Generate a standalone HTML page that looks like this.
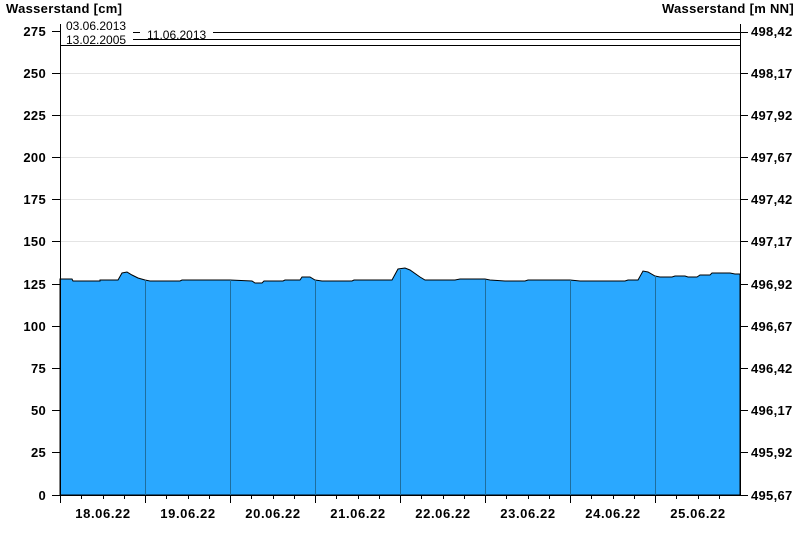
<!DOCTYPE html>
<html><head><meta charset="utf-8"><style>
body{margin:0;background:#fff;}
svg{display:block;font-family:"Liberation Sans",sans-serif;}
.b{font-weight:bold;font-size:13px;fill:#000;letter-spacing:0.3px}
.d{font-weight:bold;font-size:13px;fill:#000;letter-spacing:0.6px}
.s{font-size:12px;fill:#000}
</style></head><body>
<svg width="800" height="550" viewBox="0 0 800 550">
<rect width="800" height="550" fill="#fff"/>
<g stroke="#e4e4e4" stroke-width="1">
<line x1="60" x2="740" y1="73.5" y2="73.5"/>
<line x1="60" x2="740" y1="115.5" y2="115.5"/>
<line x1="60" x2="740" y1="157.5" y2="157.5"/>
<line x1="60" x2="740" y1="199.5" y2="199.5"/>
<line x1="60" x2="740" y1="241.5" y2="241.5"/>
</g>
<polygon fill="#2aa8ff" stroke="#000" stroke-width="1" points="60,495 60,279 72,279 73,281 100,281 100,280 118,280 122,273 127,272 132,275 138,278 145,280 150,281 180,281 182,280 230,280 252,281 255,283 262,283 264,281 283,281 285,280 300,280 302,277 310,277 315,280 322,281 352,281 354,280 392,280 398,269 405,268 410,270 420,277 425,280 455,280 460,279 485,279 490,280 505,281 525,281 528,280 570,280 580,281 625,281 628,280 638,280 643,271 648,272 655,276 660,277 672,277 675,276 685,276 688,277 697,277 700,275 710,275 712,273 730,273 735,274 740,274 740,495"/>
<g stroke="#1e6e9e" stroke-width="1">
<line x1="145.5" x2="145.5" y1="280" y2="495"/><line x1="230.5" x2="230.5" y1="280" y2="495"/>
<line x1="315.5" x2="315.5" y1="280" y2="495"/><line x1="400.5" x2="400.5" y1="270" y2="495"/>
<line x1="485.5" x2="485.5" y1="280" y2="495"/><line x1="570.5" x2="570.5" y1="280" y2="495"/>
<line x1="655.5" x2="655.5" y1="276" y2="495"/>
</g>
<g stroke="#000" stroke-width="1">
<line x1="60.5" x2="60.5" y1="24" y2="503"/>
<line x1="740.5" x2="740.5" y1="24" y2="495"/>
<line x1="52" x2="740" y1="495.5" y2="495.5"/>
<line x1="133" x2="140" y1="32.5" y2="32.5"/><line x1="213" x2="748" y1="32.5" y2="32.5"/>
<line x1="133" x2="740" y1="39.5" y2="39.5"/>
<line x1="60" x2="740" y1="45.5" y2="45.5"/>
<line x1="52" x2="60" y1="31.5" y2="31.5"/><line x1="52" x2="60" y1="73.5" y2="73.5"/><line x1="52" x2="60" y1="115.5" y2="115.5"/><line x1="52" x2="60" y1="157.5" y2="157.5"/><line x1="52" x2="60" y1="199.5" y2="199.5"/><line x1="52" x2="60" y1="241.5" y2="241.5"/><line x1="52" x2="60" y1="284.5" y2="284.5"/><line x1="52" x2="60" y1="326.5" y2="326.5"/><line x1="52" x2="60" y1="368.5" y2="368.5"/><line x1="52" x2="60" y1="410.5" y2="410.5"/><line x1="52" x2="60" y1="452.5" y2="452.5"/>
<line x1="740" x2="748" y1="73.5" y2="73.5"/><line x1="740" x2="748" y1="115.5" y2="115.5"/><line x1="740" x2="748" y1="157.5" y2="157.5"/><line x1="740" x2="748" y1="199.5" y2="199.5"/><line x1="740" x2="748" y1="241.5" y2="241.5"/><line x1="740" x2="748" y1="284.5" y2="284.5"/><line x1="740" x2="748" y1="326.5" y2="326.5"/><line x1="740" x2="748" y1="368.5" y2="368.5"/><line x1="740" x2="748" y1="410.5" y2="410.5"/><line x1="740" x2="748" y1="452.5" y2="452.5"/><line x1="740" x2="748" y1="495.5" y2="495.5"/>
<path d="M81.5 495v4M103.5 495v4M124.5 495v4M166.5 495v4M188.5 495v4M209.5 495v4M251.5 495v4M273.5 495v4M294.5 495v4M336.5 495v4M358.5 495v4M379.5 495v4M421.5 495v4M443.5 495v4M464.5 495v4M506.5 495v4M528.5 495v4M549.5 495v4M591.5 495v4M613.5 495v4M634.5 495v4M676.5 495v4M698.5 495v4M719.5 495v4"/>
<path d="M145.5 495v8M230.5 495v8M315.5 495v8M400.5 495v8M485.5 495v8M570.5 495v8M655.5 495v8"/>
</g>
<text class="b" x="6" y="13">Wasserstand [cm]</text>
<text class="b" x="794" y="13" text-anchor="end">Wasserstand [m NN]</text>
<g class="b" text-anchor="end">
<text x="46" y="36">275</text><text x="46" y="78">250</text><text x="46" y="120">225</text><text x="46" y="162">200</text><text x="46" y="204">175</text><text x="46" y="246">150</text><text x="46" y="289">125</text><text x="46" y="331">100</text><text x="46" y="373">75</text><text x="46" y="415">50</text><text x="46" y="457">25</text><text x="46" y="500">0</text>
</g>
<g class="b">
<text x="751" y="36">498,42</text><text x="751" y="78">498,17</text><text x="751" y="120">497,92</text><text x="751" y="162">497,67</text><text x="751" y="204">497,42</text><text x="751" y="246">497,17</text><text x="751" y="289">496,92</text><text x="751" y="331">496,67</text><text x="751" y="373">496,42</text><text x="751" y="415">496,17</text><text x="751" y="457">495,92</text><text x="751" y="500">495,67</text>
</g>
<g class="d" text-anchor="middle">
<text x="103" y="518">18.06.22</text><text x="188" y="518">19.06.22</text><text x="273" y="518">20.06.22</text><text x="358" y="518">21.06.22</text><text x="443" y="518">22.06.22</text><text x="528" y="518">23.06.22</text><text x="613" y="518">24.06.22</text><text x="698" y="518">25.06.22</text>
</g>
<text class="s" x="66" y="30">03.06.2013</text>
<text class="s" x="147" y="39">11.06.2013</text>
<text class="s" x="66" y="44">13.02.2005</text>
</svg>
</body></html>
